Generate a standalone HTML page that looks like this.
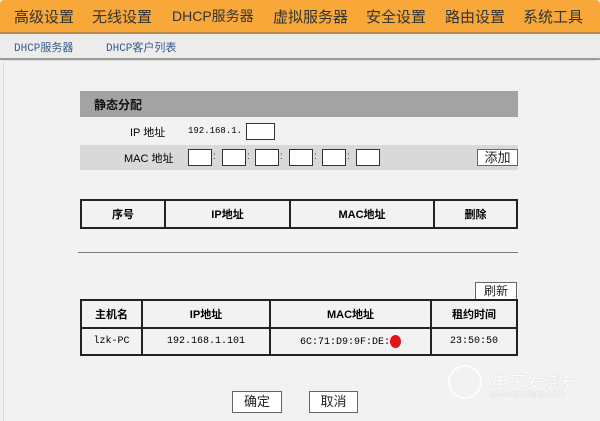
<!DOCTYPE html>
<html><head><meta charset="utf-8"><style>
body{margin:0;width:600px;height:418px;background:#f1f1f1;font-family:"Liberation Sans","Noto Sans CJK SC",sans-serif;position:relative;overflow:hidden}
.a{position:absolute}
.nav{left:0;top:0;width:600px;height:32px;background:#f7a838;border-radius:4px 4px 0 0;border-bottom:2px solid #b98a4a}
.nav span{position:absolute;top:6px;font-size:15px;color:#333}
.sub{left:0;top:34px;width:600px;height:24px;background:#ececec;border-bottom:2px solid #999}
.sub span{position:absolute;top:5px;font-size:11px;color:#3a5a8a;font-family:"Liberation Mono","Noto Sans CJK SC",monospace}
.box{left:3px;top:60px;width:594px;height:360px;border-left:1px solid #ddd;border-top:1px solid #ddd;background:#f2f2f2}
.inp{position:absolute;width:22px;height:15px;background:#fff;border:1px solid #333}
table{border-collapse:collapse;position:absolute;font-size:11px}
td{border:2px solid #222;text-align:center;font-weight:bold;padding:0}
.btn{position:absolute;background:#fff;border:1px solid #666;font-size:13px;text-align:center;color:#222;box-sizing:border-box}
.m{font-family:"Liberation Mono","Noto Sans CJK SC",monospace;font-size:10px;font-weight:normal}
.c{position:absolute;top:151px;font-size:10px;color:#333}
</style></head><body>
<div class="a nav">
<span style="left:14px">高级设置</span><span style="left:92px">无线设置</span><span style="left:172px;font-size:14px">DHCP服务器</span><span style="left:273px">虚拟服务器</span><span style="left:366px">安全设置</span><span style="left:445px">路由设置</span><span style="left:523px">系统工具</span>
</div>
<div class="a" style="left:186px;top:34px;width:0;height:0;border-left:7px solid transparent;border-right:7px solid transparent;border-top:7px solid #999"></div>
<div class="a sub"><span style="left:14px">DHCP服务器</span><span style="left:106px">DHCP客户列表</span></div>
<div class="a box"></div>
<div class="a" style="left:80px;top:91px;width:438px;height:26px;background:#a3a3a3"><span style="position:absolute;left:14px;top:5px;font-size:12px;font-weight:bold;color:#111">静态分配</span></div>
<div class="a" style="left:130px;top:124px;font-size:11px">IP 地址</div>
<div class="a m" style="left:188px;top:126px;font-size:9px">192.168.1.</div>
<div class="inp" style="left:246px;top:123px;width:27px"></div>
<div class="a" style="left:80px;top:145px;width:438px;height:25px;background:#d9d9d9"></div>
<div class="a" style="left:124px;top:150px;font-size:11px">MAC 地址</div>
<div class="inp" style="left:188px;top:149px"></div><div class="inp" style="left:222px;top:149px"></div><div class="inp" style="left:255px;top:149px"></div><div class="inp" style="left:289px;top:149px"></div><div class="inp" style="left:322px;top:149px"></div><div class="inp" style="left:356px;top:149px"></div>
<span class="c" style="left:213px">:</span><span class="c" style="left:247px">:</span><span class="c" style="left:280px">:</span><span class="c" style="left:314px">:</span><span class="c" style="left:347px">:</span>
<div class="btn" style="left:477px;top:149px;width:41px;height:17px;line-height:15px">添加</div>
<table style="left:80px;top:199px;width:438px;height:30px"><tr><td style="width:82px">序号</td><td style="width:123px">IP地址</td><td style="width:142px">MAC地址</td><td>删除</td></tr></table>
<div class="a" style="left:78px;top:252px;width:440px;height:1px;background:#777"></div>
<div class="btn" style="left:475px;top:282px;width:42px;height:18px;line-height:16px;font-size:12px">刷新</div>
<table style="left:80px;top:299px;width:438px;height:57px"><tr style="height:28px"><td style="width:59px">主机名</td><td style="width:126px">IP地址</td><td style="width:159px">MAC地址</td><td>租约时间</td></tr>
<tr><td class="m">lzk-PC</td><td class="m">192.168.1.101</td><td class="m">6C:71:D9:9F:DE:<span style="display:inline-block;width:11px;height:13px;border-radius:50%;background:#e0121a;vertical-align:middle"></span></td><td class="m">23:50:50</td></tr></table>
<div class="btn" style="left:232px;top:391px;width:50px;height:22px;line-height:20px">确定</div>
<div class="btn" style="left:309px;top:391px;width:49px;height:22px;line-height:20px">取消</div>
<div class="a" style="left:448px;top:365px;width:30px;height:30px;border:2px solid #fff;border-radius:50%;opacity:.8"></div>
<div class="a" style="left:490px;top:368px;font-size:17px;color:#fff;font-style:italic;text-shadow:0 0 1px #bbb">电子发烧友</div>
<div class="a" style="left:490px;top:389px;font-size:9px;color:#fff;text-shadow:0 0 1px #aaa">www.elecfans.com</div>
</body></html>
